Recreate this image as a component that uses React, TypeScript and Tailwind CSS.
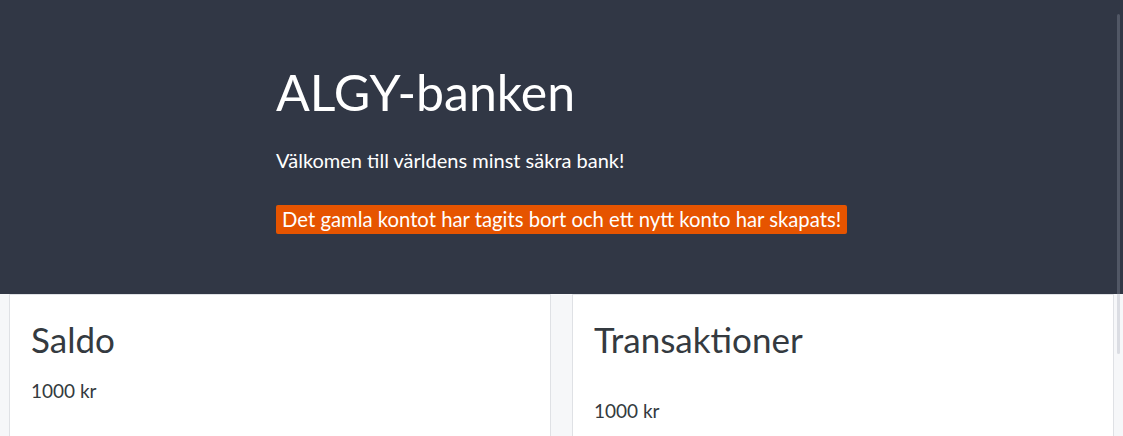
import React from "react";

const App = () => {
    return (
        <div className="min-h-[436px] bg-[#f6f7f9] text-[#343a40] font-['Lato',sans-serif]">
            <div className="w-full h-[294px] bg-[#313745] text-white">
                <div className="pl-[276px] pt-[59px]">
                    <h1 className="text-[50px] leading-[67px]">ALGY-banken</h1>
                    <p className="mt-[19px] text-[20px] leading-[30px]">Välkomen till världens minst säkra bank!</p>
                    <div className="mt-[30px]">
                        <span className="inline-block bg-[#e65400] rounded-[2px] px-[6px] text-[20.3px] leading-[29px]">
                            Det gamla kontot har tagits bort och ett nytt konto har skapats!
                        </span>
                    </div>
                </div>
            </div>
            <div className="grid grid-cols-2 gap-[21px] pl-[9px] pr-[9px]">
                <div className="bg-white border border-[#dfe1e5] border-b-0 h-[142px] px-[21px] pt-[20px]">
                    <h2 className="text-[35px] leading-[48px]">Saldo</h2>
                    <p className="mt-[13px] text-[19px] leading-[30px]">1000 kr</p>
                </div>
                <div className="bg-white border border-[#dfe1e5] border-b-0 h-[142px] px-[21px] pt-[20px]">
                    <h2 className="text-[35px] leading-[48px]">Transaktioner</h2>
                    <p className="mt-[33px] text-[19px] leading-[30px]">1000 kr</p>
                </div>
            </div>
            {/* overlay scrollbar thumb */}
            <div className="fixed right-[3px] top-[14px] h-[340px] w-[3px] rounded-full bg-[#9ca3af]/30" />
        </div>
    );
};

export default App;
